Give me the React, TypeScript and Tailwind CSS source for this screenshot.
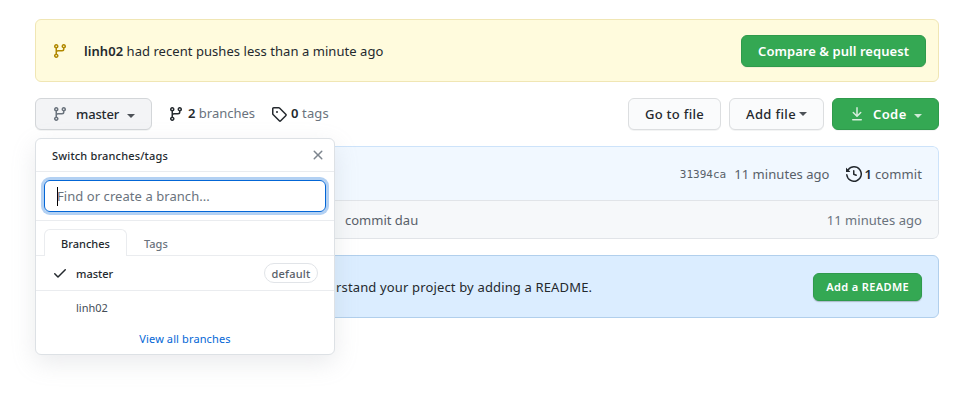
import type { ReactNode } from "react";

const paths = {
  branch:
    "M11.75 2.5a.75.75 0 100 1.5.75.75 0 000-1.5zm-2.25.75a2.25 2.25 0 113 2.122V6A2.5 2.5 0 0110 8.5H6a1 1 0 00-1 1v1.128a2.251 2.251 0 11-1.5 0V5.372a2.25 2.25 0 111.5 0v1.836A2.492 2.492 0 016 7h4a1 1 0 001-1v-.628A2.25 2.25 0 019.5 3.25zM4.25 12a.75.75 0 100 1.5.75.75 0 000-1.5zM3.5 3.25a.75.75 0 111.5 0 .75.75 0 01-1.5 0z",
  tag: "M2.5 7.775V2.75a.25.25 0 01.25-.25h5.025a.25.25 0 01.177.073l6.25 6.25a.25.25 0 010 .354l-5.025 5.025a.25.25 0 01-.354 0l-6.25-6.25a.25.25 0 01-.073-.177zm-1.5 0V2.75C1 1.784 1.784 1 2.75 1h5.025c.464 0 .91.184 1.238.513l6.25 6.25a1.75 1.75 0 010 2.474l-5.026 5.026a1.75 1.75 0 01-2.474 0l-6.25-6.25A1.75 1.75 0 011 7.775zM6 5a1 1 0 100 2 1 1 0 000-2z",
  history:
    "M1.643 3.143L.427 1.927A.25.25 0 000 2.104V5.75c0 .138.112.25.25.25h3.646a.25.25 0 00.177-.427L2.715 4.215a6.5 6.5 0 11-1.18 4.458.75.75 0 10-1.493.154 8.001 8.001 0 101.6-5.684zM7.75 4a.75.75 0 01.75.75v2.992l2.028.812a.75.75 0 01-.557 1.392l-2.5-1A.75.75 0 017 8.25v-3.5A.75.75 0 017.75 4z",
  download:
    "M7.47 10.78a.75.75 0 001.06 0l3.75-3.75a.75.75 0 00-1.06-1.06L8.75 8.44V1.75a.75.75 0 00-1.5 0v6.69L4.78 5.97a.75.75 0 00-1.06 1.06l3.75 3.75zM3.75 13a.75.75 0 000 1.5h8.5a.75.75 0 000-1.5h-8.5z",
  check:
    "M13.78 4.22a.75.75 0 010 1.06l-7.25 7.25a.75.75 0 01-1.06 0L2.22 9.28a.75.75 0 011.06-1.06L6 10.94l6.72-6.72a.75.75 0 011.06 0z",
  x: "M3.72 3.72a.75.75 0 011.06 0L8 6.94l3.22-3.22a.75.75 0 111.06 1.06L9.06 8l3.22 3.22a.75.75 0 11-1.06 1.06L8 9.06l-3.22 3.22a.75.75 0 01-1.06-1.06L6.94 8 3.72 4.78a.75.75 0 010-1.06z",
};

function Icon({ name, className = "" }: { name: keyof typeof paths; className?: string }) {
  return (
    <svg viewBox="0 0 16 16" className={`size-4 shrink-0 fill-current ${className}`} aria-hidden="true">
      <path fillRule="evenodd" d={paths[name]} />
    </svg>
  );
}

function Caret({ className = "" }: { className?: string }) {
  return <span className={`size-0 border-x-4 border-t-4 border-x-transparent ${className}`} />;
}

function Button({ className, children }: { className: string; children: ReactNode }) {
  return (
    <button
      className={`flex shrink-0 items-center rounded-md border whitespace-nowrap shadow-[0_1px_0_rgba(27,31,35,0.05)] ${className}`}
    >
      {children}
    </button>
  );
}

function BranchMenu() {
  return (
    <div className="absolute top-10 left-0 z-10 h-[217px] w-[300px] rounded-md border border-[#dde1e5] bg-white text-[11px] shadow-[0_8px_24px_rgba(149,157,165,0.2)]">
      <div className="flex h-[33px] items-center justify-between border-b border-[#eaecef] pr-2 pl-4">
        <span className="pt-px font-medium tracking-[0.17px] text-[#24292e]">Switch branches/tags</span>
        <Icon name="x" className="text-[#7d858e]" />
      </div>
      <div className="h-[49px] border-b border-[#eaecef] p-2">
        <div className="flex h-8 items-center rounded-md border border-[#0366d6] px-3 text-[13px] tracking-[0.06px] text-[#6a737d] shadow-[0_0_0_3px_rgba(3,102,214,0.3)]">
          <span className="h-[19px] w-px bg-black" />
          <span className="-ml-px">Find or create a branch...</span>
        </div>
      </div>
      <div className="flex h-[35px] items-end border-b border-[#eaecef] px-2 font-medium">
        <div className="-mb-px flex h-[27px] w-[83px] items-center justify-center rounded-t-md border border-b-0 border-[#eaecef] bg-white pt-px text-[#24292e]">
          Branches
        </div>
        <div className="flex h-[26px] items-center px-[17px] pt-[3px] text-[#6a737d]">Tags</div>
      </div>
      <div className="flex h-[35px] items-center border-b border-[#eaecef] px-4 font-medium text-[#24292e]">
        <Icon name="check" className="mr-2" />
        <span className="grow pt-px">master</span>
        <span className="flex h-5 w-[54px] items-center justify-center rounded-full border border-[#e1e4e8] pt-px tracking-[0.2px] text-[#586069]">
          default
        </span>
      </div>
      <div className="flex h-[34px] items-center pl-10 text-[#444d56]">linh02</div>
      <div className="flex h-7 items-center justify-center tracking-[0.12px] text-[#0366d6]">View all branches</div>
    </div>
  );
}

export default function App() {
  return (
    <div className="h-[413px] w-[959px] overflow-hidden bg-white pt-[19px] pr-5 pl-[35px] font-['Noto_Sans',sans-serif] text-[13px] leading-[18px] text-[#24292e]">
      <div className="flex h-[63px] items-center rounded-md border border-[#f0e6b4] bg-[#fffbdd] pr-3 pl-4">
        <Icon name="branch" className="mr-4 text-[#b08800]" />
        <p className="grow tracking-[0.05px]">
          <span className="font-semibold">linh02</span> had recent pushes less than a minute ago
        </p>
        <Button className="h-8 border-[#2f9a4c] bg-[#34a853] px-4 font-semibold tracking-[0.05px] text-white">
          Compare &amp; pull request
        </Button>
      </div>

      <div className="relative mt-4 flex h-8 items-center">
        <Button className="h-8 w-[117px] border-[#d3d6d9] bg-[#f3f4f6] px-4 font-medium tracking-[-0.15px]">
          <Icon name="branch" className="mr-2 text-[#6a737d]" />
          master
          <Caret className="mt-1 ml-2 border-t-[#4c5157]" />
        </Button>
        <div className="ml-4 flex items-center text-[#6a737d]">
          <Icon name="branch" className="mr-1 text-[#24292e]" />
          <span className="w-[83px] pb-0.5">
            <b className="font-semibold text-[#24292e]">2</b> branches
          </span>
          <Icon name="tag" className="mr-1 text-[#24292e]" />
          <span className="pb-0.5 tracking-[0.12px]">
            <b className="font-semibold text-[#24292e]">0</b> tags
          </span>
        </div>
        <div className="ml-auto flex gap-2 font-medium">
          <Button className="h-8 w-[93px] border-[#dcdee0] bg-[#fafbfc] px-4 tracking-[0.28px]">Go to file</Button>
          <Button className="h-8 w-[95px] border-[#dcdee0] bg-[#fafbfc] px-4 tracking-[0.36px]">
            Add file
            <Caret className="ml-[3px] border-t-[#4c5157]" />
          </Button>
          <Button className="h-8 w-[107px] border-[#2f9a4c] bg-[#34a853] px-4 font-semibold tracking-[0.4px] text-white">
            <Icon name="download" className="mr-2 opacity-80" />
            Code
            <Caret className="mt-1 ml-[7px] border-t-[#cfead6]" />
          </Button>
        </div>
        <BranchMenu />
      </div>

      <div className="mt-4 h-[93px] overflow-hidden rounded-md">
        <div className="flex h-[54px] items-center justify-end rounded-t-md border border-b-0 border-[#cde3fa] bg-[#f1f8ff] px-4 pt-px text-[#586069]">
          <code className="mr-2 pt-px font-['DejaVu_Sans_Mono',monospace] text-[11px]">31394ca</code>
          <span className="mr-4 tracking-[0.05px]">11 minutes ago</span>
          <Icon name="history" className="mr-[3px] text-[#24292e]" />
          <b className="mr-[3px] font-semibold text-[#24292e]">1</b>
          <span className="tracking-[0.09px]">commit</span>
        </div>
        <div className="flex h-[39px] items-center justify-between rounded-b-md border border-[#e1e4e8] bg-[#f6f8fa] pr-4 pl-[309px] text-[#6a737d]">
          <span className="text-[#586069]">commit dau</span>
          <span className="tracking-[0.05px]">11 minutes ago</span>
        </div>
      </div>

      <div className="mt-4 flex h-[63px] items-center justify-between rounded-md border border-[#b1cfec] bg-[#dbedff] pr-4 pl-[300px]">
        <p className="tracking-[0.15px]">rstand your project by adding a README.</p>
        <Button className="h-7 border-[#2f9a4c] bg-[#34a853] px-3 text-[11px] font-semibold tracking-[0.37px] text-white shadow-[0_1px_1px_rgba(27,31,35,0.25)]">
          Add a README
        </Button>
      </div>
    </div>
  );
}
